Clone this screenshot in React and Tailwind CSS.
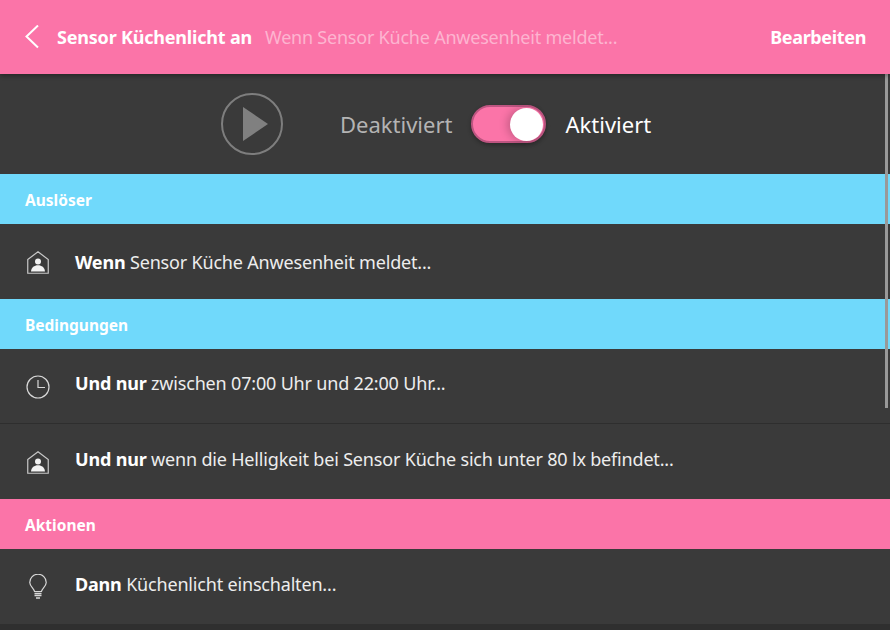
import React from 'react'

const font = { fontFamily: '"Noto Sans", "Open Sans", sans-serif' }

const HomeIcon = () => (
  <svg width="22" height="23" viewBox="0 0 22 23" fill="none" className="text-[#c8c8c8]">
    <path d="M.75 8.500 11 .75l10.250 7.750V22.250H.75Z" stroke="currentColor" strokeWidth="1.200" />
    <circle cx="11" cy="10.500" r="3" fill="#f2f2f2" />
    <path d="M4 20.500c.4-4.200 3.200-6.300 7-6.300s6.600 2.100 7 6.300Z" fill="#f2f2f2" />
  </svg>
)

const ClockIcon = () => (
  <svg width="24" height="24" viewBox="0 0 24 24" fill="none" className="text-[#d8d8d8]">
    <circle cx="12" cy="12" r="11" stroke="currentColor" strokeWidth="1.200" />
    <path d="M12 5v7.500h7" stroke="currentColor" strokeWidth="1.200" />
  </svg>
)

const BulbIcon = () => (
  <svg width="18" height="25" viewBox="0 0 18 25" fill="none" className="text-[#d8d8d8]">
    <path d="M5.500 17.500C5 14.500.75 12 .75 8.500a8.250 8.250 0 0 1 16.500 0c0 3.500-4.250 6-4.750 9Z" stroke="currentColor" strokeWidth="1.200" />
    <path d="M5.500 19.500h7M5.500 21.500h7M7 24h4" stroke="currentColor" strokeWidth="1.300" />
  </svg>
)

const Section = ({ children, color }) => (
  <div className={`h-[50px] flex items-center pl-[25px] pt-[4px] text-[15.5px] font-bold text-white ${color}`}>
    {children}
  </div>
)

const Row = ({ icon, iconPad, bold, text, border, textPad }) => (
  <div className={`h-[75px] flex items-center ${border ? 'border-b border-[#2e2e2e]' : ''}`}>
    <div className={`w-[75px] flex justify-start shrink-0 ${iconPad}`}>{icon}</div>
    <p className={`text-[18px] text-[#ededed] tracking-[-0.18px] whitespace-nowrap ${textPad}`}>
      <span className="font-bold text-white">{bold}</span> {text}
    </p>
  </div>
)

export default function App() {
  return (
    <div className="relative w-[890px] h-[630px] overflow-hidden bg-[#2f2f2f]" style={font}>
      <header className="h-[74px] bg-[#fb74a8] flex items-center text-white shadow-[0_2px_4px_rgba(0,0,0,0.3)] relative z-10">
        <svg width="14" height="24" viewBox="0 0 14 24" fill="none" className="ml-[25px] shrink-0">
          <path d="M13 .5 1.500 11.500 13 22.500" stroke="white" strokeWidth="2" />
        </svg>
        <span className="ml-[18px] text-[18px] font-bold tracking-[-0.2px] whitespace-nowrap">Sensor Küchenlicht an</span>
        <span className="ml-[13px] text-[18px] text-[#fdb4d0] tracking-[-0.22px] whitespace-nowrap">Wenn Sensor Küche Anwesenheit meldet...</span>
        <span className="ml-auto mr-[24px] text-[18px] font-bold tracking-[-0.35px]">Bearbeiten</span>
      </header>

      <div className="bg-[#3a3a3a]">
        <div className="h-[100px] flex items-center pl-[221px]">
          <div className="w-[62px] h-[62px] rounded-full border-2 border-[#7e7e7e] flex items-center justify-center pl-[7px]">
            <svg width="25" height="34" viewBox="0 0 25 34"><path d="M0 0 25 17 0 34Z" fill="#808080" /></svg>
          </div>
          <span className="ml-[57px] text-[22px] text-[#b4b4b4]">Deaktiviert</span>
          <div className="ml-[19px] w-[75px] h-[38px] rounded-full bg-[#fb74a8] border-2 border-[#bd5581] flex items-center justify-end pr-[1px] shadow-[0_2px_4px_rgba(0,0,0,0.3)]">
            <div className="w-[33px] h-[33px] rounded-full bg-white shadow-[-3px_0_8px_rgba(0,0,0,0.2)]" />
          </div>
          <span className="ml-[19px] text-[22px] text-white">Aktiviert</span>
        </div>

        <Section color="bg-[#70d9fb]">Auslöser</Section>
        <Row icon={<HomeIcon />} iconPad="pl-[27px] pt-[2px]" bold="Wenn" text="Sensor Küche Anwesenheit meldet..." textPad="pt-[2px]" />
        <Section color="bg-[#70d9fb]">Bedingungen</Section>
        <Row icon={<ClockIcon />} iconPad="pl-[26px] pt-[1px]" bold="Und nur" text="zwischen 07:00 Uhr und 22:00 Uhr..." textPad="pb-[5px]" border />
        <Row icon={<HomeIcon />} iconPad="pl-[27px] pt-[1px]" bold="Und nur" text="wenn die Helligkeit bei Sensor Küche sich unter 80 lx befindet..." textPad="pb-[5px]" />
        <Section color="bg-[#fb74a8]">Aktionen</Section>
        <Row icon={<BulbIcon />} iconPad="pl-[29px]" bold="Dann" text="Küchenlicht einschalten..." textPad="pb-[4px]" />
      </div>

      {/* overlay scrollbar */}
      <div className="absolute left-[885px] top-[74px] w-[3px] h-[334px] bg-[#999999]" />
    </div>
  )
}
